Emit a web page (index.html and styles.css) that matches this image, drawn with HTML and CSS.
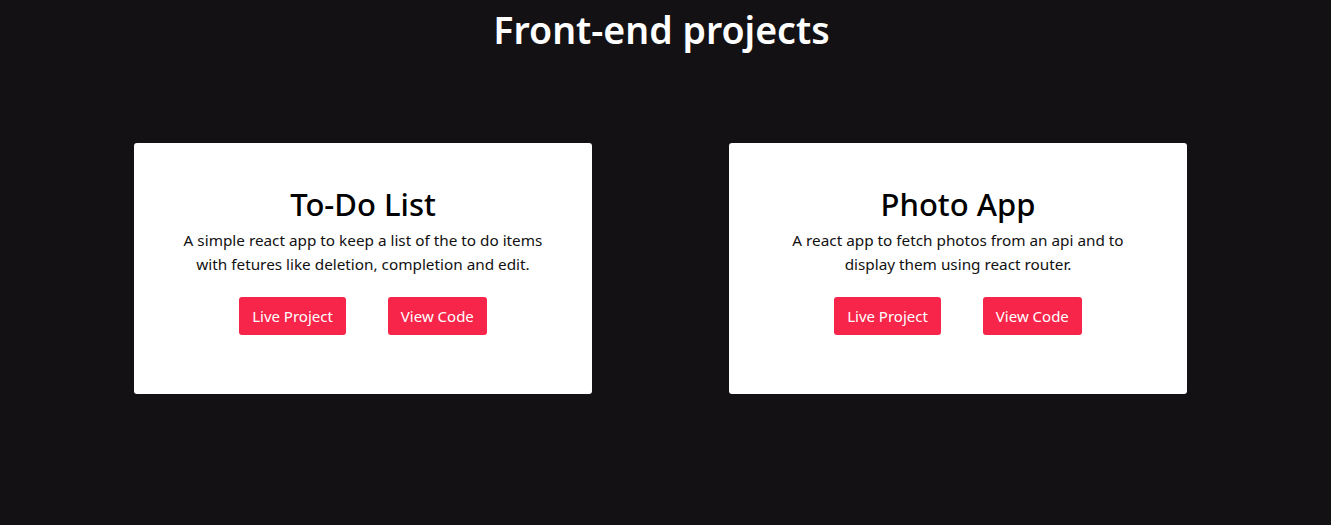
FILE: index.html
```html
<!DOCTYPE html>
<html>
<head>
<meta charset="utf-8">
<link rel="stylesheet" href="styles.css">
</head>
<body>
<h1 class="page-title">Front-end projects</h1>
<div class="projects">
  <div class="card">
    <h2 class="card-title">To-Do List</h2>
    <p class="card-desc">A simple react app to keep a list of the to do items<br>with fetures like deletion, completion and edit.</p>
    <div class="actions">
      <a class="btn">Live Project</a>
      <a class="btn">View Code</a>
    </div>
  </div>
  <div class="card">
    <h2 class="card-title">Photo App</h2>
    <p class="card-desc">A react app to fetch photos from an api and to<br>display them using react router.</p>
    <div class="actions">
      <a class="btn">Live Project</a>
      <a class="btn">View Code</a>
    </div>
  </div>
</div>
</body>
</html>
```
FILE: styles.css
```css
html, body {
  margin: 0;
  padding: 0;
  background: #131113;
  height: 100%;
}
body {
  font-family: "Noto Sans", "Open Sans", sans-serif;
}
.page-title {
  margin: 0;
  padding-top: 5px;
  padding-right: 8px;
  text-align: center;
  color: #ffffff;
  font-size: 37.5px;
  font-weight: 600;
  line-height: 50px;
}
.projects {
  display: flex;
  gap: 137px;
  padding-left: 134px;
  margin-top: 88px;
}
.card {
  width: 458px;
  height: 251px;
  box-sizing: border-box;
  background: #ffffff;
  border-radius: 3px;
  padding-top: 39px;
  text-align: center;
}
.card-title {
  margin: 0;
  font-size: 31px;
  font-weight: 500;
  line-height: 44px;
  color: #000;
}
.card-desc {
  margin: 0;
  padding-top: 2px;
  font-size: 15.3px;
  line-height: 24px;
  color: #111;
}
.actions {
  display: flex;
  justify-content: center;
  gap: 42px;
  margin-top: 21px;
}
.btn {
  display: inline-block;
  background: #f7254a;
  color: #fff;
  font-size: 15px;
  line-height: 38px;
  height: 38px;
  padding: 0 13px;
  border-radius: 3px;
}
```
